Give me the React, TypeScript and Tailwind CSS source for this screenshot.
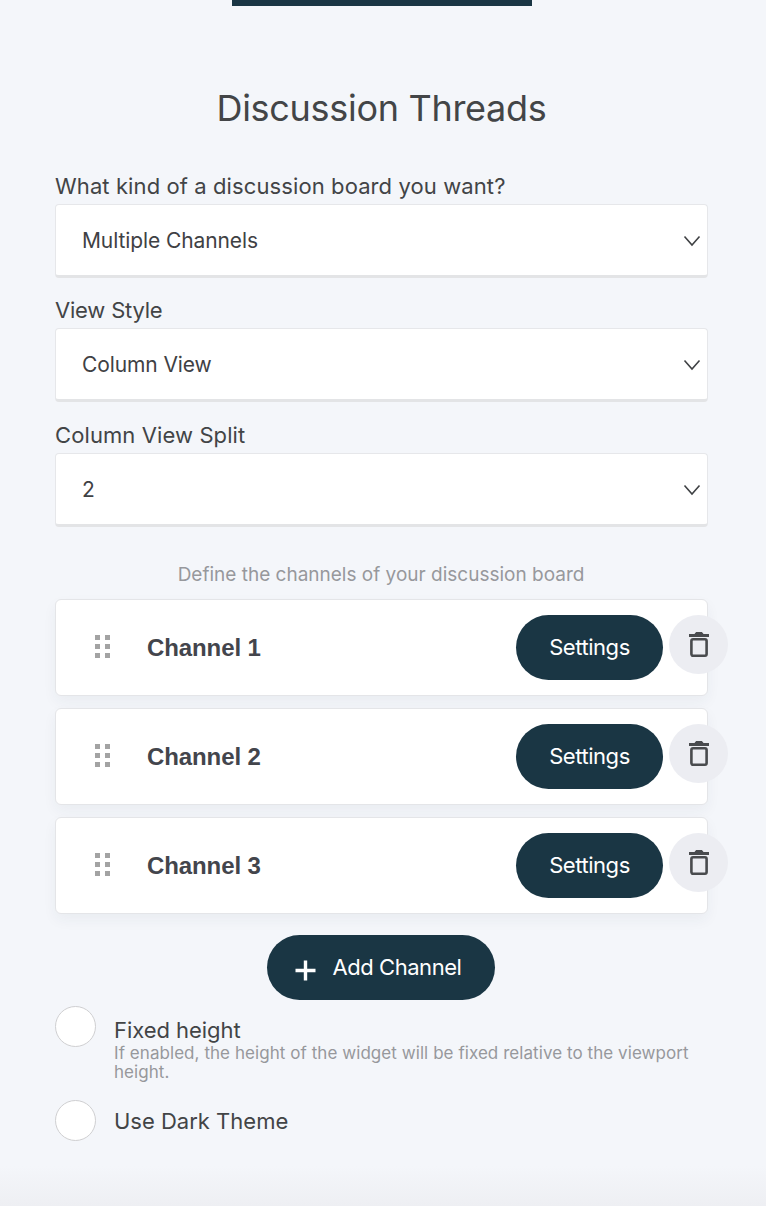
import React from "react";

function Select({ value }: { value: string }) {
  return (
    <div className="flex h-[74px] items-center justify-between rounded-[4px] border border-[#e6e7ea] border-b-[3px] border-b-[#e3e4e6] bg-white pl-[26px] pr-[6px] pt-[2px] text-[21px] tracking-[-0.1px] text-[#3f4144]">
      <span>{value}</span>
      <svg width="18" height="12" viewBox="0 0 18 12" fill="none" stroke="#3f4144" strokeWidth="1.6">
        <path d="M1.5 1.5 9 10l7.5-8.5" />
      </svg>
    </div>
  );
}

function Grip() {
  return (
    <div className="grid w-fit grid-cols-[5px_5px] gap-x-[5px] gap-y-[4px]">
      {[0, 1, 2, 3, 4, 5].map((i) => (
        <span key={i} className="h-[5px] w-[5px] bg-[#a3a3a3]" />
      ))}
    </div>
  );
}

function Channel({ name }: { name: string }) {
  return (
    <div className="flex h-[97px] items-center rounded-[6px] border border-[#e4e5e8] bg-white pl-[39px] shadow-[0_6px_14px_rgba(40,50,80,0.05)]">
      <div className="-mt-[3px]"><Grip /></div>
      <span className="ml-[37px] mt-[1px] flex-1 font-['Liberation_Sans'] text-[24px] font-bold tracking-[-0.1px] text-[#43454c]">{name}</span>
      <div className="-mr-[21px] -mt-[1px] flex items-start gap-[6px] self-center">
        <button className="h-[65px] w-[147px] rounded-full bg-[#1a3644] text-[22px] tracking-[-0.45px] text-white">Settings</button>
        <button className="flex h-[59px] w-[59px] items-center justify-center rounded-full bg-[#ecedf2]">
          <svg width="20" height="25" viewBox="0 0 20 25" fill="none">
            <path d="M0 3.5h20" stroke="#494b4e" strokeWidth="3" />
            <path d="M6 2 7 0.5h6l1 1.5z" fill="#494b4e" stroke="#494b4e" />
            <rect x="2.4" y="7.3" width="15.2" height="16.4" rx="1.6" stroke="#494b4e" strokeWidth="2.6" />
          </svg>
        </button>
      </div>
    </div>
  );
}

function Radio() {
  return <span className="block h-[41px] w-[41px] shrink-0 rounded-full border border-[#cfcfd1] bg-white" />;
}

export default function App() {
  return (
    <div className="relative h-[1206px] w-[766px] overflow-hidden bg-[#f4f6fa] font-['Inter',sans-serif] text-[#424446]">
      <div className="mx-auto h-[6px] w-[300px] -translate-x-[1px] bg-[#1a3644]" />
      <div className="pl-[55px] pr-[58px]">
        <h1 className="mt-[80px] text-center text-[36px] leading-[44px] tracking-[-0.3px] text-[#434547] font-normal">Discussion Threads</h1>
        <label className="mt-[41px] block text-[22px] leading-[30px] tracking-[0.1px]">What kind of a discussion board you want?</label>
        <div className="mt-[3px]"><Select value="Multiple Channels" /></div>
        <label className="mt-[17px] block text-[22px] leading-[30px] tracking-[-0.2px]">View Style</label>
        <div className="mt-[3px]"><Select value="Column View" /></div>
        <label className="mt-[18px] block text-[22px] leading-[30px] tracking-[0.1px]">Column View Split</label>
        <div className="mt-[3px]"><Select value="2" /></div>
        <p className="mt-[36px] pr-[1px] text-center text-[19px] leading-[24px] text-[#97989c]">Define the channels of your discussion board</p>
        <div className="mt-[12px] flex flex-col gap-[12px]">
          <Channel name="Channel 1" />
          <Channel name="Channel 2" />
          <Channel name="Channel 3" />
        </div>
        <div className="mt-[21px] flex justify-center pr-[2px]">
          <button className="flex h-[65px] w-[228px] items-center justify-start gap-[17px] rounded-full bg-[#1a3644] pl-[28px] text-[22px] tracking-[-0.45px] text-white">
            <svg width="21" height="21" viewBox="0 0 21 21" className="mt-[5px]" fill="none" stroke="#fff" strokeWidth="3.4">
              <path d="M10.5 0.5v20M0.5 10.5h20" />
            </svg>
            Add Channel
          </button>
        </div>
        <div className="mt-[6px] flex gap-[18px]">
          <Radio />
          <div className="pt-[9px]">
            <div className="text-[22px] leading-[30px] tracking-[-0.05px]">Fixed height</div>
            <div className="-mt-[1px] text-[17px] leading-[19px] tracking-[0.06px] text-[#97989c]">If enabled, the height of the widget will be fixed relative to the viewport height.</div>
          </div>
        </div>
        <div className="mt-[18px] flex items-center gap-[18px]">
          <Radio />
          <div className="text-[22px] leading-[30px] tracking-[0px]">Use Dark Theme</div>
        </div>
      </div>
      <div className="absolute bottom-0 left-0 h-[40px] w-full bg-gradient-to-b from-[#f4f6fa] to-[#eeeff3]" />
    </div>
  );
}
